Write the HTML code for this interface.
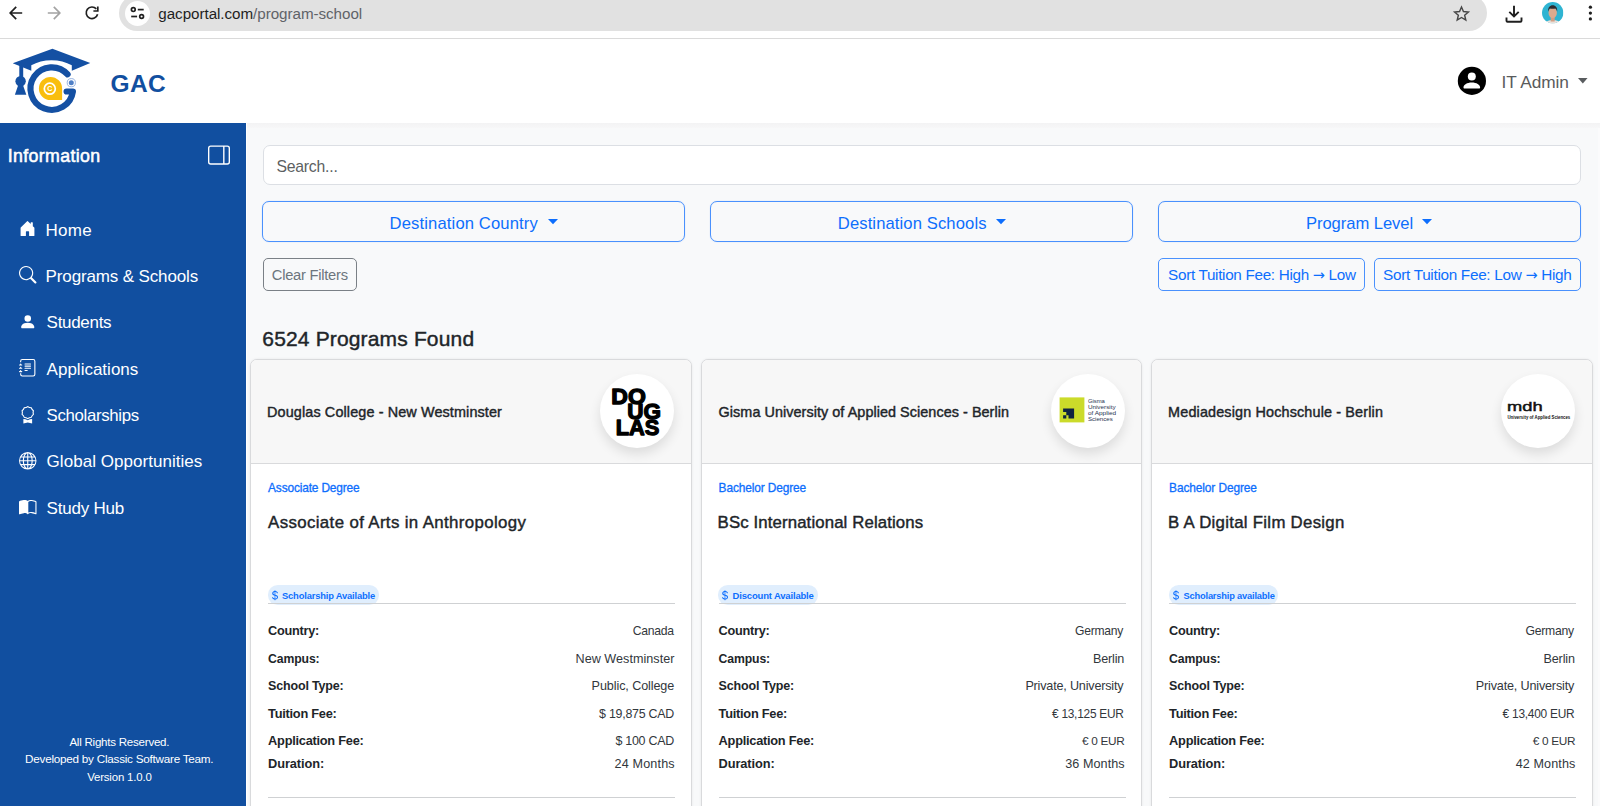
<!DOCTYPE html>
<html lang="en">
<head>
<meta charset="utf-8">
<title>GAC Portal - Programs &amp; Schools</title>
<style>
*{box-sizing:border-box;margin:0;padding:0}
html,body{width:1600px;height:806px;overflow:hidden;background:#f8f9fa;font-family:"Liberation Sans",sans-serif;color:#212529}
.t{position:absolute;white-space:nowrap;line-height:1;z-index:5}
svg{position:absolute;overflow:visible}
#chrome{position:absolute;left:0;top:0;width:1600px;height:39px;background:#fff;border-bottom:1px solid #dadada}
#urlpill{position:absolute;left:119px;top:-5px;width:1368px;height:36px;border-radius:18px;background:#e1e1e1}
#siteinfo{position:absolute;left:124.5px;top:0.5px;width:25px;height:25px;border-radius:50%;background:#fefefe}
#header{position:absolute;left:0;top:39px;width:1600px;height:84px;background:#fff}
#hshadow{position:absolute;left:246px;top:123px;width:1354px;height:4.6px;background:linear-gradient(#f3f3f4,#f7f7f8)}
#rstrip{position:absolute;left:1597.5px;top:127.6px;width:2.5px;height:680px;background:#fbfbfc}
#sbline{position:absolute;left:245.8px;top:123px;width:1.4px;height:683px;background:#fff}
#sidebar{position:absolute;left:0;top:123px;width:245.8px;height:683px;background:#114fa0}
#search{position:absolute;left:262.5px;top:145px;width:1318px;height:40px;background:#fff;border:1px solid #dcdfe4;border-radius:7px}
.dd{position:absolute;top:200.9px;height:41.3px;border:1.7px solid #4a91fd;border-radius:7px;box-shadow:0 0 1px rgba(13,110,253,.35)}
.btn{position:absolute;top:258.1px;height:33.1px;border:1.6px solid #4a91fd;border-radius:5px}
.card{position:absolute;top:359px;height:470px;background:#fff;border:1px solid #d9dadc;border-radius:7px;box-shadow:0 0 2.5px rgba(0,0,0,.08)}
.card .hd{position:absolute;left:0;top:0;width:100%;height:104px;background:#f7f7f7;border-bottom:1px solid #d9dadc;border-radius:6px 6px 0 0}
.card .logo{position:absolute;left:349px;top:14.4px;width:74px;height:74px;border-radius:50%;background:#fff;box-shadow:0 6px 12px rgba(0,0,0,.11)}
.ar{font-family:"DejaVu Sans",sans-serif;font-size:14.5px;line-height:0;position:relative;top:-0.5px}
.card .badge{position:absolute;left:16.7px;top:225.1px;height:19.6px;border-radius:9.8px;background:#e0eefd}
.card .hr{position:absolute;left:17px;width:407px;height:1.2px;background:#cfd1d3}
</style>
</head>
<body>
<div id="chrome">
  <div id="urlpill"></div>
  <div id="siteinfo"></div>
  <!-- back -->
  <svg style="left:8px;top:5px" width="16" height="16" viewBox="0 0 16 16" fill="none" stroke="#1f1f1f" stroke-width="1.7"><path d="M14.2 8H2.6M8.2 1.9 2.2 8l6 6.100"/></svg>
  <!-- forward -->
  <svg style="left:45.500px;top:5px" width="16" height="16" viewBox="0 0 16 16" fill="none" stroke="#a3a3a3" stroke-width="1.7"><path d="M1.800 8h11.600M7.800 1.900l6 6.100-6 6.100"/></svg>
  <!-- reload -->
  <svg style="left:83.500px;top:5px" width="16" height="16" viewBox="0 0 16 16" fill="none" stroke="#1f1f1f" stroke-width="1.7"><path d="M13.600 9.300A5.800 5.800 0 1 1 12.300 3.900"/><path d="M13.800 1.600V6H9.400" stroke-linejoin="miter"/></svg>
  <!-- tune / site info -->
  <svg style="left:129.500px;top:6px" width="15" height="14" viewBox="0 0 15 14" fill="none" stroke="#1f1f1f" stroke-width="1.700"><circle cx="3.300" cy="3.600" r="1.900"/><path d="M7.800 3.600h5.900"/><path d="M1.200 10.500h5.900"/><circle cx="11.600" cy="10.500" r="1.900"/></svg>
  <!-- star -->
  <svg style="left:1453px;top:5px" width="17" height="17" viewBox="0 0 24 24" fill="none" stroke="#474747" stroke-width="2" stroke-linejoin="miter"><path d="M12 2.800l2.750 6.450 7 .6-5.300 4.600 1.600 6.850L12 17.650 5.950 21.300l1.600-6.850-5.300-4.600 7-.6z"/></svg>
  <!-- download -->
  <svg style="left:1504.800px;top:4.500px" width="18" height="18" viewBox="0 0 18 18" fill="none" stroke="#1f1f1f" stroke-width="1.900"><path d="M9 .8v10.400M4.300 6.800 9 11.500l4.700-4.700"/><path d="M1.500 12.600v3.100a1 1 0 0 0 1 1h13a1 1 0 0 0 1-1v-3.100"/></svg>
  <!-- avatar -->
  <svg style="left:1541.700px;top:2.100px" width="21.400" height="21.400" viewBox="0 0 21.400 21.400">
    <defs><clipPath id="avc"><circle cx="10.700" cy="10.700" r="10.700"/></clipPath></defs>
    <g clip-path="url(#avc)">
      <rect width="21.400" height="21.400" fill="#2fb4d2"/>
      <path d="M2.500 23c.5-3.300 3-4.300 5.500-4.700h5.400c2.500.4 5 1.400 5.500 4.700z" fill="#e9e1dc"/>
      <rect x="8.700" y="14.500" width="4" height="5" fill="#d39f83"/>
      <ellipse cx="10.700" cy="10.800" rx="4.200" ry="5.300" fill="#dcaa8e"/>
      <path d="M6.200 9.800c-.5-4.300 1.700-6.600 4.500-6.600s5 2.300 4.500 6.600c-.5-2-1.300-3-1.800-3.300-1.700.5-3.700.5-5.400 0-.5.300-1.300 1.300-1.800 3.300z" fill="#2e2b2f"/>
    </g>
  </svg>
  <!-- menu dots -->
  <svg style="left:1588px;top:5px" width="5" height="16" viewBox="0 0 5 16" fill="#1f1f1f"><circle cx="2.400" cy="2.200" r="1.650"/><circle cx="2.400" cy="8.100" r="1.650"/><circle cx="2.400" cy="13.900" r="1.650"/></svg>
</div>

<div id="header">
  <!-- GAC logo -->
  <svg style="left:0;top:0" width="100" height="84" viewBox="0 39 100 84">
    <g fill="#1450a3">
      <path d="M52.400 48.700 90.300 62.900 71.800 70.700V65.300C66 62 59 60.200 51.500 60.200S37 62 31.300 65.300V70.700L12.700 63.300z"/>
      <rect x="19.300" y="64.500" width="3.900" height="14"/>
      <circle cx="20.600" cy="81.200" r="5.200"/>
      <path d="M18.400 84.500h4.400l3.500 10.300H14.900z"/>
    </g>
    <path d="M67.600 74.300A21.300 21.300 0 1 0 72.900 91.500H66.600" fill="none" stroke="#1450a3" stroke-width="6.200" stroke-linecap="round" stroke-linejoin="round"/>
    <path d="M50.500 76.900a11.600 11.600 0 1 0 0 23.200H62.100V88.500A11.600 11.600 0 0 0 50.500 76.900z" fill="#f9be0e"/>
    <circle cx="49.800" cy="88.700" r="5.500" fill="none" stroke="#fff" stroke-width="1.700"/>
    <text x="49.900" y="91.300" font-family="Liberation Sans, sans-serif" font-weight="bold" font-size="7.200" fill="#fff" text-anchor="middle">C</text>
    <circle cx="71.300" cy="82.700" r="4.100" fill="#fff" stroke="#8aaade" stroke-width="0.900"/>
    <circle cx="71.300" cy="82.700" r="2.500" fill="#4f7fc6"/>
  </svg>
  <!-- account circle -->
  <svg style="left:1457px;top:27px" width="30" height="30" viewBox="1457 66 30 30"><circle cx="1471.900" cy="80.900" r="14.100" fill="#000"/><circle cx="1471.800" cy="76.500" r="4" fill="#fff"/><path d="M1463.500 87.600c0-3 3.600-5.200 8.300-5.200s8.300 2.200 8.300 5.200c0 .6-.4 1-1 1h-14.600c-.6 0-1-.4-1-1z" fill="#fff"/></svg>
  <svg style="left:1578.100px;top:39.300px" width="9.600" height="5.600" viewBox="0 0 9.600 5.600" fill="#595c5f"><path d="M0 0h9.600L4.800 5.600z"/></svg>
</div>

<div id="sidebar">
  <!-- layout-sidebar-reverse -->
  <svg style="left:208.400px;top:21px" width="22" height="22" viewBox="0 0 16 16" fill="#fff"><path d="M16 3a2 2 0 0 0-2-2H2a2 2 0 0 0-2 2v10a2 2 0 0 0 2 2h12a2 2 0 0 0 2-2V3zm-5-1v12H2a1 1 0 0 1-1-1V3a1 1 0 0 1 1-1h9zm1 0h2a1 1 0 0 1 1 1v10a1 1 0 0 1-1 1h-2V2z"/></svg>
  <!-- house-door-fill -->
  <svg style="left:18.500px;top:97px" width="17" height="17" viewBox="0 0 16 16" fill="#fff"><path d="M6.500 14.500v-3.505c0-.245.250-.495.500-.495h2c.250 0 .5.250.5.5v3.500a.5.5 0 0 0 .5.500h4a.5.500 0 0 0 .5-.5v-7a.5.500 0 0 0-.146-.354L13 5.793V2.500a.5.500 0 0 0-.5-.5h-1a.5.500 0 0 0-.5.500v1.293L8.354 1.146a.5.500 0 0 0-.708 0l-6 6A.5.500 0 0 0 1.500 7.500v7a.5.500 0 0 0 .5.500h4a.5.500 0 0 0 .5-.5z"/></svg>
  <!-- search -->
  <svg style="left:18.700px;top:143.300px" width="17.500" height="17.500" viewBox="0 0 16 16" fill="#fff"><path d="M11.742 10.344a6.500 6.500 0 1 0-1.397 1.398h-.001c.030.040.062.078.098.115l3.850 3.850a1 1 0 0 0 1.415-1.414l-3.850-3.850a1.007 1.007 0 0 0-.115-.100zM12 6.500a5.500 5.500 0 1 1-11 0 5.500 5.500 0 0 1 11 0z"/></svg>
  <!-- person-fill -->
  <svg style="left:18.700px;top:189.600px" width="17.500" height="17.500" viewBox="0 0 16 16" fill="#fff"><path d="M3 14s-1 0-1-1 1-4 6-4 6 3 6 4-1 1-1 1H3zm5-6a3 3 0 1 0 0-6 3 3 0 0 0 0 6z"/></svg>
  <!-- journal-text -->
  <svg style="left:18.500px;top:236px" width="17.500" height="17.500" viewBox="0 0 16 16" fill="#fff"><path d="M5 10.500a.5.500 0 0 1 .5-.5h2a.5.500 0 0 1 0 1h-2a.5.500 0 0 1-.5-.5zm0-2a.5.500 0 0 1 .5-.5h5a.5.500 0 0 1 0 1h-5a.5.500 0 0 1-.5-.5zm0-2a.5.500 0 0 1 .5-.5h5a.5.500 0 0 1 0 1h-5a.5.500 0 0 1-.5-.5zm0-2a.5.500 0 0 1 .5-.5h5a.5.500 0 0 1 0 1h-5a.5.500 0 0 1-.5-.5z"/><path d="M3 0h10a2 2 0 0 1 2 2v12a2 2 0 0 1-2 2H3a2 2 0 0 1-2-2v-1h1v1a1 1 0 0 0 1 1h10a1 1 0 0 0 1-1V2a1 1 0 0 0-1-1H3a1 1 0 0 0-1 1v1H1V2a2 2 0 0 1 2-2z"/><path d="M1 5v-.5a.5.500 0 0 1 1 0V5h.5a.5.500 0 0 1 0 1h-2a.5.500 0 0 1 0-1H1zm0 3v-.5a.5.500 0 0 1 1 0V8h.5a.5.500 0 0 1 0 1h-2a.5.500 0 0 1 0-1H1zm0 3v-.5a.5.500 0 0 1 1 0v.5h.5a.5.500 0 0 1 0 1h-2a.5.500 0 0 1 0-1H1z"/></svg>
  <!-- award -->
  <svg style="left:18.700px;top:282.500px" width="17.500" height="17.500" viewBox="0 0 16 16" fill="#fff"><path d="M9.669.864 8 0 6.331.864l-1.858.282-.842 1.680-1.337 1.320L2.600 6l-.306 1.854 1.337 1.320.842 1.680 1.858.282L8 12l1.669-.864 1.858-.282.842-1.680 1.337-1.320L13.400 6l.306-1.854-1.337-1.320-.842-1.680L9.669.864zm1.196 1.193.684 1.365 1.086 1.072L12.387 6l.248 1.506-1.086 1.072-.684 1.365-1.510.229L8 10.874l-1.355-.702-1.510-.229-.684-1.365-1.086-1.072L3.614 6l-.250-1.506 1.087-1.072.684-1.365 1.510-.229L8 1.126l1.356.702 1.509.229z"/><path d="M4 11.794V16l4-1 4 1v-4.206l-2.018.306L8 13.126 6.018 12.100 4 11.794z"/></svg>
  <!-- globe -->
  <svg style="left:18.700px;top:329px" width="17.500" height="17.500" viewBox="0 0 16 16" fill="#fff"><path d="M0 8a8 8 0 1 1 16 0A8 8 0 0 1 0 8zm7.500-6.923c-.670.204-1.335.820-1.887 1.855A7.970 7.970 0 0 0 5.145 4H7.500V1.077zM4.090 4a9.267 9.267 0 0 1 .640-1.539 6.700 6.700 0 0 1 .597-.933A7.025 7.025 0 0 0 2.255 4H4.090zm-.582 3.500c.030-.877.138-1.718.312-2.500H1.674a6.958 6.958 0 0 0-.656 2.500h2.490zM4.847 5a12.500 12.500 0 0 0-.338 2.500H7.500V5H4.847zM8.500 5v2.500h2.990a12.495 12.495 0 0 0-.337-2.500H8.500zM4.510 8.500a12.500 12.500 0 0 0 .337 2.500H7.500V8.500H4.510zm3.990 0V11h2.653c.187-.765.306-1.608.338-2.500H8.500zM5.145 12c.138.386.295.744.468 1.068.552 1.035 1.218 1.650 1.887 1.855V12H5.145zm.182 2.472a6.696 6.696 0 0 1-.597-.933A9.268 9.268 0 0 1 4.090 12H2.255a7.024 7.024 0 0 0 3.072 2.472zM3.820 11a13.652 13.652 0 0 1-.312-2.500h-2.490c.062.890.291 1.733.656 2.500H3.820zm6.853 3.472A7.024 7.024 0 0 0 13.745 12H11.910a9.270 9.270 0 0 1-.640 1.539 6.688 6.688 0 0 1-.597.933zM8.500 12v2.923c.670-.204 1.335-.820 1.887-1.855.173-.324.330-.682.468-1.068H8.500zm3.680-1h2.146c.365-.767.594-1.610.656-2.500h-2.490a13.650 13.650 0 0 1-.312 2.500zm2.802-3.500a6.959 6.959 0 0 0-.656-2.500H12.180c.174.782.282 1.623.312 2.500h2.490zM11.270 2.461c.247.464.462.980.640 1.539h1.835a7.024 7.024 0 0 0-3.072-2.472c.218.284.418.598.597.933zM10.855 4a7.966 7.966 0 0 0-.468-1.068C9.835 1.897 9.170 1.282 8.500 1.077V4h2.355z"/></svg>
  <!-- book-half -->
  <svg style="left:18.700px;top:375.500px" width="17.500" height="17.500" viewBox="0 0 16 16" fill="#fff"><path d="M8.500 2.687c.654-.689 1.782-.886 3.112-.752 1.234.124 2.503.523 3.388.893v9.923c-.918-.350-2.107-.692-3.287-.810-1.094-.111-2.278-.039-3.213.492V2.687zM8 1.783C7.015.936 5.587.810 4.287.940c-1.514.153-3.042.672-3.994 1.105A.5.500 0 0 0 0 2.500v11a.5.500 0 0 0 .707.455c.882-.400 2.303-.881 3.680-1.020 1.409-.142 2.590.087 3.223.877a.5.500 0 0 0 .780 0c.633-.790 1.814-1.019 3.222-.877 1.378.139 2.800.620 3.681 1.020A.5.500 0 0 0 16 13.500v-11a.5.500 0 0 0-.293-.455c-.952-.433-2.480-.952-3.994-1.105C10.413.809 8.985.936 8 1.783z"/></svg>
</div>

<div id="hshadow"></div><div id="rstrip"></div><div id="sbline"></div>
<div id="search"></div>
<div class="dd" style="left:262.200px;width:422.900px"></div>
<div class="dd" style="left:709.800px;width:423px"></div>
<div class="dd" style="left:1157.800px;width:422.900px"></div>
<svg style="left:548px;top:218.700px" width="10" height="5.400" viewBox="0 0 10 5.200" fill="#0d6efd"><path d="M0 0h10L5 5.200z"/></svg>
<svg style="left:995.500px;top:218.700px" width="10" height="5.400" viewBox="0 0 10 5.200" fill="#0d6efd"><path d="M0 0h10L5 5.200z"/></svg>
<svg style="left:1422px;top:218.700px" width="10" height="5.400" viewBox="0 0 10 5.200" fill="#0d6efd"><path d="M0 0h10L5 5.200z"/></svg>
<div class="btn" style="left:262.500px;width:94.700px;border-color:#7a8086"></div>
<div class="btn" style="left:1158.100px;width:207.200px"></div>
<div class="btn" style="left:1373.700px;width:207.300px"></div>

<div class="card" style="left:250px;width:442px">
  <div class="hd"></div><div class="logo"></div>
  <svg style="left:349px;top:14.400px" width="74" height="74" viewBox="600 374.400 74 74" font-family="Liberation Sans, sans-serif" font-weight="bold" font-size="22.200" fill="#000" stroke="#000" stroke-width="1.3" stroke-linejoin="round">
    <text x="611.300" y="404.600" textLength="34.500" lengthAdjust="spacingAndGlyphs">DO</text>
    <text x="627.300" y="419.200" textLength="33.800" lengthAdjust="spacingAndGlyphs">UG</text>
    <text x="615.700" y="435.300" textLength="43.600" lengthAdjust="spacingAndGlyphs">LAS</text>
  </svg>
  <div class="badge" style="width:111.400px"></div>
  <div class="hr" style="top:243px"></div>
  <div class="hr" style="top:436.600px"></div>
</div>
<div class="card" style="left:700.500px;width:441.500px">
  <div class="hd"></div><div class="logo"></div>
  <svg style="left:349px;top:14.400px" width="74" height="74" viewBox="1050.900 374.400 74 74" font-family="Liberation Sans, sans-serif" font-size="5.900" fill="#2a3350">
    <rect x="1059.500" y="397.800" width="24.800" height="25" fill="#cbdb2a"/>
    <path d="M1063 408.900h11v10.100h-5.600v-3.300h-2.200v-3.300H1063zM1063 415.700h3.200v3.300H1063z" fill="#0f2340"/>
    <text x="1087.800" y="403" textLength="17" lengthAdjust="spacingAndGlyphs">Gisma</text>
    <text x="1087.800" y="409.300" textLength="27.700" lengthAdjust="spacingAndGlyphs">University</text>
    <text x="1087.800" y="415.600" textLength="28.300" lengthAdjust="spacingAndGlyphs">of Applied</text>
    <text x="1087.800" y="421.900" textLength="24.800" lengthAdjust="spacingAndGlyphs">Sciences</text>
  </svg>
  <div class="badge" style="width:99.600px"></div>
  <div class="hr" style="top:243px"></div>
  <div class="hr" style="top:436.600px"></div>
</div>
<div class="card" style="left:1151px;width:442px">
  <div class="hd"></div><div class="logo"></div>
  <svg style="left:349px;top:14.400px" width="74" height="74" viewBox="1501.200 374.400 74 74" font-family="Liberation Sans, sans-serif" fill="#111">
    <text x="1507.300" y="411.600" font-size="13.200" textLength="35.600" lengthAdjust="spacingAndGlyphs" stroke="#111" stroke-width="0.45">mdh</text>
    <text x="1507.700" y="419.300" font-size="4.500" font-weight="bold" textLength="62.700" lengthAdjust="spacingAndGlyphs">University of Applied Sciences</text>
  </svg>
  <div class="badge" style="width:109.700px"></div>
  <div class="hr" style="top:243px"></div>
  <div class="hr" style="top:436.600px"></div>
</div>
<!-- badge $ icons -->
<svg style="left:271.900px;top:589.500px" width="5.800" height="10.600" viewBox="4 1 8 14" fill="#0d6efd"><path d="M4 10.781c.148 1.667 1.513 2.850 3.591 3.003V15h1.043v-1.216c2.270-.179 3.678-1.438 3.678-3.300 0-1.590-.947-2.510-2.956-3.028l-.722-.187V3.467c1.122.110 1.879.714 2.070 1.616h1.470c-.166-1.600-1.540-2.748-3.540-2.875V1H7.591v1.233c-1.939.230-3.270 1.472-3.270 3.156 0 1.454.966 2.483 2.661 2.917l.610.162v4.031c-1.149-.170-1.940-.800-2.131-1.718H4zm3.391-3.836c-1.043-.263-1.600-.825-1.600-1.616 0-.944.704-1.641 1.800-1.828v3.495l-.200-.050zm1.591 1.872c1.287.323 1.852.859 1.852 1.769 0 1.097-.826 1.828-2.200 1.939V8.730l.348.086z"/></svg>
<svg style="left:722.400px;top:589.500px" width="5.800" height="10.600" viewBox="4 1 8 14" fill="#0d6efd"><path d="M4 10.781c.148 1.667 1.513 2.850 3.591 3.003V15h1.043v-1.216c2.270-.179 3.678-1.438 3.678-3.300 0-1.590-.947-2.510-2.956-3.028l-.722-.187V3.467c1.122.110 1.879.714 2.070 1.616h1.470c-.166-1.600-1.540-2.748-3.540-2.875V1H7.591v1.233c-1.939.230-3.270 1.472-3.270 3.156 0 1.454.966 2.483 2.661 2.917l.610.162v4.031c-1.149-.170-1.940-.800-2.131-1.718H4zm3.391-3.836c-1.043-.263-1.600-.825-1.600-1.616 0-.944.704-1.641 1.800-1.828v3.495l-.200-.050zm1.591 1.872c1.287.323 1.852.859 1.852 1.769 0 1.097-.826 1.828-2.200 1.939V8.730l.348.086z"/></svg>
<svg style="left:1172.900px;top:589.500px" width="5.800" height="10.600" viewBox="4 1 8 14" fill="#0d6efd"><path d="M4 10.781c.148 1.667 1.513 2.850 3.591 3.003V15h1.043v-1.216c2.270-.179 3.678-1.438 3.678-3.300 0-1.590-.947-2.510-2.956-3.028l-.722-.187V3.467c1.122.110 1.879.714 2.070 1.616h1.470c-.166-1.600-1.540-2.748-3.540-2.875V1H7.591v1.233c-1.939.230-3.270 1.472-3.270 3.156 0 1.454.966 2.483 2.661 2.917l.610.162v4.031c-1.149-.170-1.940-.800-2.131-1.718H4zm3.391-3.836c-1.043-.263-1.600-.825-1.600-1.616 0-.944.704-1.641 1.800-1.828v3.495l-.200-.050zm1.591 1.872c1.287.323 1.852.859 1.852 1.769 0 1.097-.826 1.828-2.200 1.939V8.730l.348.086z"/></svg>

<div class="t" id="t0" style="left:158.30px;top:6.00px;font-size:15.2px;color:#1f1f1f;letter-spacing:-0.046px;">gacportal.com<span style="color:#5f6368">/program-school</span></div>
<div class="t" id="t1" style="left:110.50px;top:72.00px;font-size:24.5px;color:#114fa0;font-weight:bold;letter-spacing:0.370px;">GAC</div>
<div class="t" id="t2" style="left:1501.50px;top:74.00px;font-size:17.3px;color:#5a5b5c;letter-spacing:-0.069px;">IT Admin</div>
<div class="t" id="t3" style="left:7.70px;top:148.00px;font-size:17.74px;color:#fff;-webkit-text-stroke:0.55px currentColor;letter-spacing:0.374px;">Information</div>
<div class="t" id="t4" style="left:45.60px;top:222.00px;font-size:17.0px;color:#fff;letter-spacing:0.232px;">Home</div>
<div class="t" id="t5" style="left:45.60px;top:268.00px;font-size:17.0px;color:#fff;letter-spacing:-0.138px;">Programs &amp; Schools</div>
<div class="t" id="t6" style="left:46.60px;top:314.00px;font-size:17.0px;color:#fff;letter-spacing:-0.301px;">Students</div>
<div class="t" id="t7" style="left:46.60px;top:361.00px;font-size:17.0px;color:#fff;letter-spacing:0.003px;">Applications</div>
<div class="t" id="t8" style="left:46.60px;top:408.00px;font-size:16.81px;color:#fff;letter-spacing:-0.334px;">Scholarships</div>
<div class="t" id="t9" style="left:46.60px;top:453.00px;font-size:17.0px;color:#fff;letter-spacing:0.038px;">Global Opportunities</div>
<div class="t" id="t10" style="left:46.60px;top:500.00px;font-size:17.0px;color:#fff;letter-spacing:-0.217px;">Study Hub</div>
<div class="t" id="t11" style="left:69.40px;top:737.00px;font-size:11.55px;color:#fff;letter-spacing:-0.237px;">All Rights Reserved.</div>
<div class="t" id="t12" style="left:25.10px;top:753.00px;font-size:11.69px;color:#fff;letter-spacing:-0.238px;">Developed by Classic Software Team.</div>
<div class="t" id="t13" style="left:87.20px;top:772.00px;font-size:11.43px;color:#fff;letter-spacing:-0.170px;">Version 1.0.0</div>
<div class="t" id="t14" style="left:276.40px;top:159.00px;font-size:15.79px;color:#5c5f62;letter-spacing:-0.221px;">Search...</div>
<div class="t" id="t15" style="left:389.60px;top:216.00px;font-size:16.6px;color:#0d6efd;letter-spacing:0.137px;">Destination Country</div>
<div class="t" id="t16" style="left:837.80px;top:216.00px;font-size:16.6px;color:#0d6efd;letter-spacing:0.113px;">Destination Schools</div>
<div class="t" id="t17" style="left:1305.90px;top:216.00px;font-size:16.6px;color:#0d6efd;letter-spacing:-0.053px;">Program Level</div>
<div class="t" id="t18" style="left:271.80px;top:268.00px;font-size:14.72px;color:#6c757d;letter-spacing:-0.257px;">Clear Filters</div>
<div class="t" id="t19" style="left:1168.10px;top:267.00px;font-size:15.26px;color:#0d6efd;letter-spacing:-0.307px;">Sort Tuition Fee: High <span class="ar">→</span> Low</div>
<div class="t" id="t20" style="left:1383.10px;top:267.00px;font-size:15.34px;color:#0d6efd;letter-spacing:-0.309px;">Sort Tuition Fee: Low <span class="ar">→</span> High</div>
<div class="t" id="t21" style="left:262.30px;top:328.00px;font-size:21.0px;color:#212529;-webkit-text-stroke:0.42px currentColor;letter-spacing:0.156px;">6524 Programs Found</div>
<div class="t" id="t22" style="left:267.10px;top:405.00px;font-size:14.4px;color:#212529;-webkit-text-stroke:0.42px currentColor;letter-spacing:0.122px;">Douglas College - New Westminster</div>
<div class="t" id="t23" style="left:268.10px;top:483.00px;font-size:11.9px;color:#0d6efd;-webkit-text-stroke:0.3px currentColor;letter-spacing:-0.156px;">Associate Degree</div>
<div class="t" id="t24" style="left:268.10px;top:515.00px;font-size:16.84px;color:#212529;-webkit-text-stroke:0.42px currentColor;letter-spacing:0.368px;">Associate of Arts in Anthropology</div>
<div class="t" id="t25" style="left:282.00px;top:592.00px;font-size:9.37px;color:#0d6efd;font-weight:bold;letter-spacing:-0.169px;">Scholarship Available</div>
<div class="t" id="t26" style="left:268.10px;top:625.00px;font-size:12.73px;color:#212529;font-weight:bold;letter-spacing:-0.252px;">Country:</div>
<div class="t" id="t27" style="left:632.70px;top:625.00px;font-size:12.18px;color:#32373c;letter-spacing:-0.254px;">Canada</div>
<div class="t" id="t28" style="left:268.10px;top:653.00px;font-size:12.22px;color:#212529;font-weight:bold;letter-spacing:-0.119px;">Campus:</div>
<div class="t" id="t29" style="left:575.50px;top:653.00px;font-size:12.6px;color:#32373c;letter-spacing:0.039px;">New Westminster</div>
<div class="t" id="t30" style="left:268.10px;top:680.00px;font-size:12.5px;color:#212529;font-weight:bold;letter-spacing:-0.173px;">School Type:</div>
<div class="t" id="t31" style="left:591.60px;top:680.00px;font-size:12.6px;color:#32373c;letter-spacing:-0.094px;">Public, College</div>
<div class="t" id="t32" style="left:268.10px;top:708.00px;font-size:12.8px;color:#212529;font-weight:bold;letter-spacing:-0.255px;">Tuition Fee:</div>
<div class="t" id="t33" style="left:599.10px;top:708.00px;font-size:12.42px;color:#32373c;letter-spacing:-0.253px;">$ 19,875 CAD</div>
<div class="t" id="t34" style="left:268.10px;top:735.00px;font-size:12.79px;color:#212529;font-weight:bold;letter-spacing:-0.251px;">Application Fee:</div>
<div class="t" id="t35" style="left:615.40px;top:735.00px;font-size:12.46px;color:#32373c;letter-spacing:-0.254px;">$ 100 CAD</div>
<div class="t" id="t36" style="left:268.10px;top:758.00px;font-size:12.8px;color:#212529;font-weight:bold;letter-spacing:-0.102px;">Duration:</div>
<div class="t" id="t37" style="left:614.50px;top:758.00px;font-size:12.6px;color:#32373c;letter-spacing:0.161px;">24 Months</div>
<div class="t" id="t38" style="left:718.60px;top:405.00px;font-size:14.4px;color:#212529;-webkit-text-stroke:0.42px currentColor;letter-spacing:0.056px;">Gisma University of Applied Sciences - Berlin</div>
<div class="t" id="t39" style="left:718.60px;top:483.00px;font-size:11.9px;color:#0d6efd;-webkit-text-stroke:0.3px currentColor;letter-spacing:-0.116px;">Bachelor Degree</div>
<div class="t" id="t40" style="left:717.60px;top:515.00px;font-size:16.8px;color:#212529;-webkit-text-stroke:0.42px currentColor;letter-spacing:0.121px;">BSc International Relations</div>
<div class="t" id="t41" style="left:732.50px;top:591.00px;font-size:9.49px;color:#0d6efd;font-weight:bold;letter-spacing:-0.164px;">Discount Available</div>
<div class="t" id="t42" style="left:718.60px;top:625.00px;font-size:12.73px;color:#212529;font-weight:bold;letter-spacing:-0.252px;">Country:</div>
<div class="t" id="t43" style="left:1075.10px;top:625.00px;font-size:12.11px;color:#32373c;letter-spacing:-0.260px;">Germany</div>
<div class="t" id="t44" style="left:718.60px;top:653.00px;font-size:12.22px;color:#212529;font-weight:bold;letter-spacing:-0.119px;">Campus:</div>
<div class="t" id="t45" style="left:1092.90px;top:653.00px;font-size:12.6px;color:#32373c;letter-spacing:-0.160px;">Berlin</div>
<div class="t" id="t46" style="left:718.60px;top:680.00px;font-size:12.5px;color:#212529;font-weight:bold;letter-spacing:-0.173px;">School Type:</div>
<div class="t" id="t47" style="left:1025.40px;top:680.00px;font-size:12.6px;color:#32373c;letter-spacing:-0.183px;">Private, University</div>
<div class="t" id="t48" style="left:718.60px;top:708.00px;font-size:12.8px;color:#212529;font-weight:bold;letter-spacing:-0.255px;">Tuition Fee:</div>
<div class="t" id="t49" style="left:1052.00px;top:709.00px;font-size:11.89px;color:#32373c;letter-spacing:-0.249px;">€ 13,125 EUR</div>
<div class="t" id="t50" style="left:718.60px;top:735.00px;font-size:12.79px;color:#212529;font-weight:bold;letter-spacing:-0.251px;">Application Fee:</div>
<div class="t" id="t51" style="left:1082.00px;top:736.00px;font-size:11.84px;color:#32373c;letter-spacing:-0.310px;">€ 0 EUR</div>
<div class="t" id="t52" style="left:718.60px;top:758.00px;font-size:12.8px;color:#212529;font-weight:bold;letter-spacing:-0.102px;">Duration:</div>
<div class="t" id="t53" style="left:1065.30px;top:758.00px;font-size:12.6px;color:#32373c;letter-spacing:0.061px;">36 Months</div>
<div class="t" id="t54" style="left:1168.10px;top:405.00px;font-size:14.4px;color:#212529;-webkit-text-stroke:0.42px currentColor;letter-spacing:0.148px;">Mediadesign Hochschule - Berlin</div>
<div class="t" id="t55" style="left:1169.10px;top:483.00px;font-size:11.9px;color:#0d6efd;-webkit-text-stroke:0.3px currentColor;letter-spacing:-0.102px;">Bachelor Degree</div>
<div class="t" id="t56" style="left:1168.10px;top:515.00px;font-size:16.8px;color:#212529;-webkit-text-stroke:0.42px currentColor;letter-spacing:0.295px;">B A Digital Film Design</div>
<div class="t" id="t57" style="left:1183.50px;top:592.00px;font-size:9.31px;color:#0d6efd;font-weight:bold;letter-spacing:-0.185px;">Scholarship available</div>
<div class="t" id="t58" style="left:1169.10px;top:625.00px;font-size:12.73px;color:#212529;font-weight:bold;letter-spacing:-0.252px;">Country:</div>
<div class="t" id="t59" style="left:1525.50px;top:625.00px;font-size:12.2px;color:#32373c;letter-spacing:-0.255px;">Germany</div>
<div class="t" id="t60" style="left:1169.10px;top:653.00px;font-size:12.22px;color:#212529;font-weight:bold;letter-spacing:-0.119px;">Campus:</div>
<div class="t" id="t61" style="left:1543.50px;top:653.00px;font-size:12.6px;color:#32373c;letter-spacing:-0.140px;">Berlin</div>
<div class="t" id="t62" style="left:1169.10px;top:680.00px;font-size:12.5px;color:#212529;font-weight:bold;letter-spacing:-0.173px;">School Type:</div>
<div class="t" id="t63" style="left:1475.80px;top:680.00px;font-size:12.6px;color:#32373c;letter-spacing:-0.166px;">Private, University</div>
<div class="t" id="t64" style="left:1169.10px;top:708.00px;font-size:12.8px;color:#212529;font-weight:bold;letter-spacing:-0.255px;">Tuition Fee:</div>
<div class="t" id="t65" style="left:1502.60px;top:709.00px;font-size:11.92px;color:#32373c;letter-spacing:-0.254px;">€ 13,400 EUR</div>
<div class="t" id="t66" style="left:1169.10px;top:735.00px;font-size:12.79px;color:#212529;font-weight:bold;letter-spacing:-0.251px;">Application Fee:</div>
<div class="t" id="t67" style="left:1532.70px;top:736.00px;font-size:11.84px;color:#32373c;letter-spacing:-0.310px;">€ 0 EUR</div>
<div class="t" id="t68" style="left:1169.10px;top:758.00px;font-size:12.8px;color:#212529;font-weight:bold;letter-spacing:-0.102px;">Duration:</div>
<div class="t" id="t69" style="left:1515.70px;top:758.00px;font-size:12.6px;color:#32373c;letter-spacing:0.098px;">42 Months</div>
</body>
</html>
